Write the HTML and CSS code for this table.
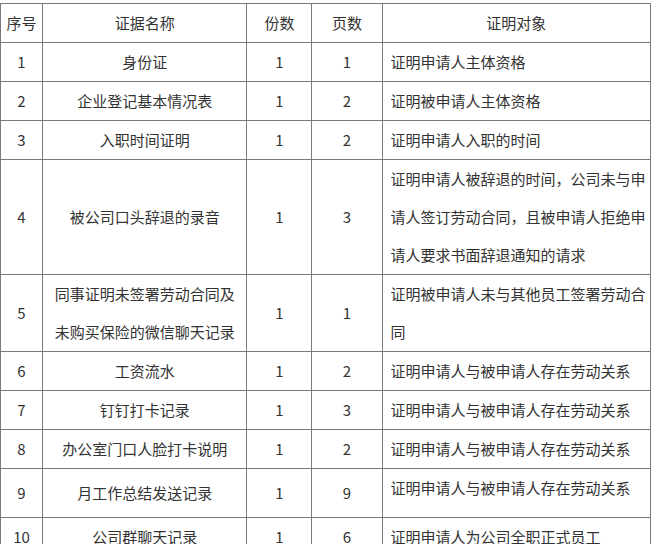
FILE: index.html
```html
<!DOCTYPE html>
<html lang="zh">
<head>
<meta charset="utf-8">
<link rel="stylesheet" href="styles.css">
</head>
<body>
<table class="evidence">
  <colgroup>
    <col class="c-no"><col class="c-name"><col class="c-copies"><col class="c-pages"><col class="c-purpose">
  </colgroup>
  <thead>
    <tr><th>序号</th><th>证据名称</th><th>份数</th><th>页数</th><th>证明对象</th></tr>
  </thead>
  <tbody>
    <tr><td>1</td><td>身份证</td><td>1</td><td>1</td><td class="purpose">证明申请人主体资格</td></tr>
    <tr><td>2</td><td>企业登记基本情况表</td><td>1</td><td>2</td><td class="purpose">证明被申请人主体资格</td></tr>
    <tr><td>3</td><td>入职时间证明</td><td>1</td><td>2</td><td class="purpose">证明申请人入职的时间</td></tr>
    <tr><td>4</td><td>被公司口头辞退的录音</td><td>1</td><td>3</td><td class="purpose">证明申请人被辞退的时间，公司未与申请人签订劳动合同，且被申请人拒绝申请人要求书面辞退通知的请求</td></tr>
    <tr><td>5</td><td>同事证明未签署劳动合同及<br>未购买保险的微信聊天记录</td><td>1</td><td>1</td><td class="purpose">证明被申请人未与其他员工签署劳动合同</td></tr>
    <tr><td>6</td><td>工资流水</td><td>1</td><td>2</td><td class="purpose">证明申请人与被申请人存在劳动关系</td></tr>
    <tr><td>7</td><td>钉钉打卡记录</td><td>1</td><td>3</td><td class="purpose">证明申请人与被申请人存在劳动关系</td></tr>
    <tr><td>8</td><td>办公室门口人脸打卡说明</td><td>1</td><td>2</td><td class="purpose">证明申请人与被申请人存在劳动关系</td></tr>
    <tr class="tall"><td>9</td><td>月工作总结发送记录</td><td>1</td><td>9</td><td class="purpose top">证明申请人与被申请人存在劳动关系</td></tr>
    <tr><td>10</td><td>公司群聊天记录</td><td>1</td><td>6</td><td class="purpose">证明申请人为公司全职正式员工</td></tr>
  </tbody>
</table>
</body>
</html>
```

FILE: styles.css
```css
html, body {
  margin: 0;
  padding: 0;
  background: #ffffff;
}
body {
  padding: 3px 0 0 0;
  font-family: "Noto Sans CJK SC", "Noto Sans", sans-serif;
  color: #333333;
  font-size: 15px;
}
.evidence {
  border-collapse: collapse;
  table-layout: fixed;
  width: 651px;
}
.c-no { width: 42px; }
.c-name { width: 204px; }
.c-copies { width: 65px; }
.c-pages { width: 70px; }
.c-purpose { width: 268px; }
.evidence th,
.evidence td {
  border: 1.5px solid #7a7a7a;
  font-weight: normal;
  text-align: center;
  vertical-align: middle;
  line-height: 38px;
  padding: 0;
}
.evidence td.purpose {
  text-align: left;
  padding: 0 3px 0 8px;
}
.evidence tr.tall td {
  height: 48px;
}
.evidence td.top {
  vertical-align: top;
}
```
